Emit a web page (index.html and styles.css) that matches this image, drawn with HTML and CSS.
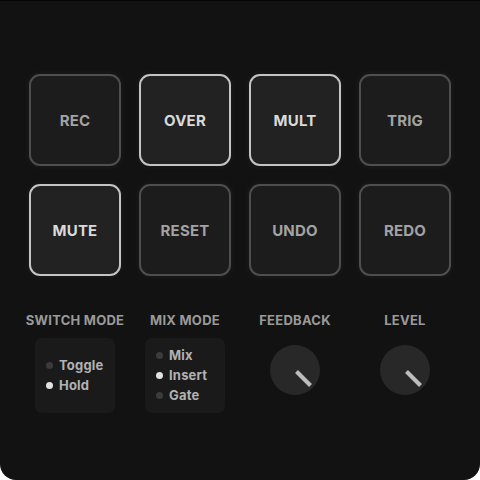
FILE: index.html
```html
<!DOCTYPE html>
<html lang="en">
<head>
<meta charset="utf-8">
<title>Looper</title>
<link rel="stylesheet" href="styles.css">
</head>
<body>
<main class="panel">
  <section class="pads">
    <button class="pad">REC</button>
    <button class="pad pad-on">OVER</button>
    <button class="pad pad-on">MULT</button>
    <button class="pad">TRIG</button>
    <button class="pad pad-on">MUTE</button>
    <button class="pad">RESET</button>
    <button class="pad">UNDO</button>
    <button class="pad">REDO</button>
  </section>

  <section class="controls">
    <div class="control">
      <div class="label">SWITCH MODE</div>
      <ul class="radio radio-two">
        <li class="opt"><span class="dot"></span>Toggle</li>
        <li class="opt"><span class="dot dot-on"></span>Hold</li>
      </ul>
    </div>
    <div class="control">
      <div class="label">MIX MODE</div>
      <ul class="radio">
        <li class="opt"><span class="dot"></span>Mix</li>
        <li class="opt"><span class="dot dot-on"></span>Insert</li>
        <li class="opt"><span class="dot"></span>Gate</li>
      </ul>
    </div>
    <div class="control">
      <div class="label">FEEDBACK</div>
      <svg class="knob" width="50" height="50" viewBox="0 0 50 50">
        <circle cx="25" cy="25" r="25" fill="#282828"/>
        <line x1="26.5" y1="26.5" x2="40.5" y2="40.5" stroke="#bdbdbd" stroke-width="4"/>
      </svg>
    </div>
    <div class="control">
      <div class="label">LEVEL</div>
      <svg class="knob" width="50" height="50" viewBox="0 0 50 50">
        <circle cx="25" cy="25" r="25" fill="#282828"/>
        <line x1="26.5" y1="26.5" x2="40.5" y2="40.5" stroke="#bdbdbd" stroke-width="4"/>
      </svg>
    </div>
  </section>
</main>
</body>
</html>
```
FILE: styles.css
```css
html, body {
  margin: 0;
  padding: 0;
  background: #ffffff;
}

body {
  font-family: Inter, "Noto Sans", sans-serif;
}

.panel {
  box-sizing: border-box;
  width: 480px;
  height: 480px;
  background: #121212;
  border-top: 1px solid #050505;
  border-radius: 0 0 16px 16px;
  padding-top: 73px;
}

.pads {
  display: grid;
  grid-template-columns: repeat(4, 92px);
  grid-auto-rows: 92px;
  gap: 18px;
  justify-content: center;
}

.pad {
  box-sizing: border-box;
  margin: 0;
  padding: 0;
  border: 2px solid #4e4e4e;
  border-radius: 11px;
  background: #1c1c1c;
  color: #a3a3a3;
  font-family: inherit;
  font-weight: 700;
  font-size: 15px;
  letter-spacing: 0.2px;
  box-shadow: 0 0 7px 1px rgba(255, 255, 255, 0.045);
}

.pad-on {
  border-color: #c4c4c4;
  background: #222222;
  color: #dadada;
}

.controls {
  display: grid;
  grid-template-columns: repeat(4, 92px);
  column-gap: 18px;
  justify-content: center;
  margin-top: 36px;
}

.control {
  display: flex;
  flex-direction: column;
  align-items: center;
}

.label {
  font-size: 13px;
  line-height: 16px;
  font-weight: 700;
  letter-spacing: 0.25px;
  color: #9a9a9a;
  white-space: nowrap;
}

.radio {
  box-sizing: border-box;
  list-style: none;
  margin: 10px 0 0;
  width: 80px;
  height: 75px;
  padding: 7px 0 0 11px;
  background: #1a1a1a;
  border-radius: 7px;
}

.radio-two {
  padding-top: 17px;
}

.opt {
  display: flex;
  align-items: center;
  gap: 6px;
  height: 20px;
  font-size: 13px;
  font-weight: 700;
  letter-spacing: 0.2px;
  color: #b2b2b2;
}

.dot {
  width: 7px;
  height: 7px;
  border-radius: 50%;
  background: #3b3b3b;
}

.dot-on {
  background: #e2e2e2;
}

.knob {
  display: block;
  margin-top: 17px;
}
```
